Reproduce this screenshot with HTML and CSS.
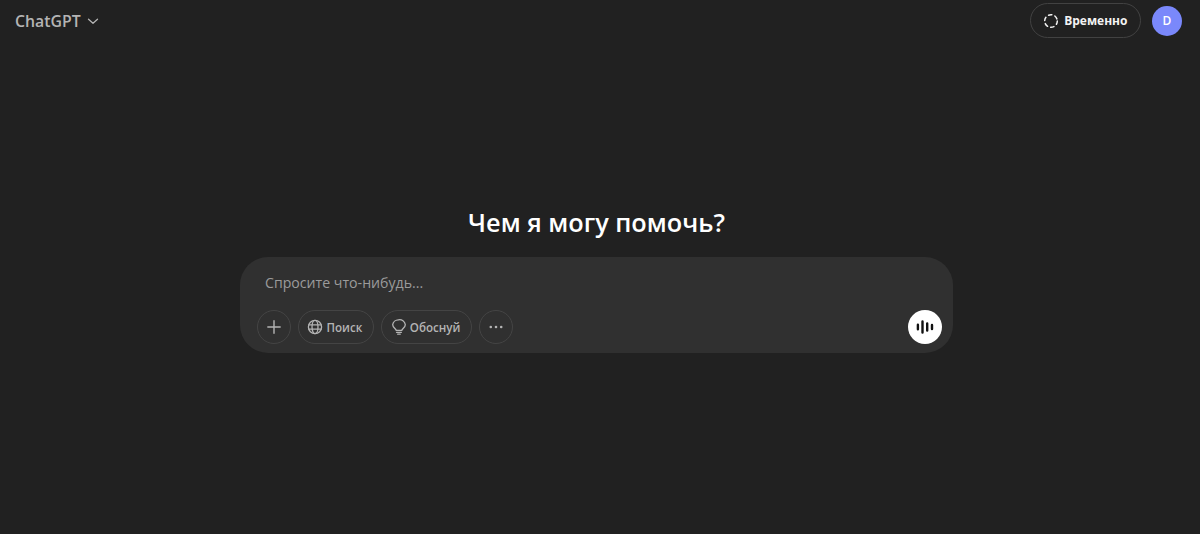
FILE: index.html
```html
<!DOCTYPE html>
<html lang="ru">
  <head>
    <meta charset="utf-8" />
    <title>ChatGPT</title>
    <link rel="stylesheet" href="styles.css">
  </head>

  <body>
    <header class="topbar">
      <div class="model">
        <span>ChatGPT</span>
        <svg class="chevron" width="12" height="12" viewBox="0 0 12 12" fill="none" stroke="currentColor" stroke-width="1.3" stroke-linecap="round" stroke-linejoin="round"><path d="M1.5 4.2 6 8.2 10.5 4.2"/></svg>
      </div>
      <div class="topbar-right">
        <button class="temp" type="button">
          <svg width="16" height="16" viewBox="0 0 16 16" fill="none" stroke="currentColor" stroke-width="1.5" stroke-linecap="round"><circle cx="8" cy="8" r="6.3" stroke-dasharray="3.4 3.2"/></svg>
          Временно
        </button>
        <div class="avatar">D</div>
      </div>
    </header>

    <main class="center">
      <h1 class="greeting">Чем я могу помочь?</h1>
      <form class="composer">
        <div class="prompt">Спросите что-нибудь...</div>
        <div class="tools">
          <button class="tool round" type="button" aria-label="Добавить">
            <svg width="16" height="16" viewBox="0 0 16 16" fill="none" stroke="currentColor" stroke-width="1.4" stroke-linecap="round"><path d="M8 1.8v12.400M1.800 8h12.400"/></svg>
          </button>
          <button class="tool" type="button">
            <svg width="16" height="16" viewBox="0 0 16 16" fill="none" stroke="currentColor" stroke-width="1.3"><circle cx="8" cy="8" r="6.600"/><ellipse cx="8" cy="8" rx="3" ry="6.600"/><path d="M1.400 5.800h13.200M1.400 10.200h13.200"/></svg>
            Поиск
          </button>
          <button class="tool" type="button">
            <svg width="16" height="16" viewBox="-1.500 0 16 16" fill="none" stroke="currentColor" stroke-width="1.3" stroke-linecap="round" stroke-linejoin="round"><path d="M4.700 11.400c0-1.500-3.500-2.800-3.500-5.700A5.700 5.700 0 0 1 7 .8a5.700 5.700 0 0 1 6.800 4.900c0 2.900-3.500 4.200-3.500 5.700z"/><path d="M5 13.300h4.900M6.200 15.200h2.500"/></svg>
            Обоснуй
          </button>
          <button class="tool round" type="button" aria-label="Ещё">
            <svg width="16" height="16" viewBox="0 0 16 16" fill="currentColor"><circle cx="2.800" cy="8" r="1.300"/><circle cx="8" cy="8" r="1.300"/><circle cx="13.200" cy="8" r="1.300"/></svg>
          </button>
          <button class="voice" type="button" aria-label="Голос">
            <svg width="20" height="20" viewBox="0 0 20 20" fill="none" stroke="currentColor" stroke-width="2.400" stroke-linecap="round"><path d="M2.900 7.800v4.400M7.500 4.500v11M12.200 6.500v7M17 8v4"/></svg>
          </button>
        </div>
      </form>
    </main>
  </body>
</html>
```

FILE: styles.css
```css
* {
  box-sizing: border-box;
}

body {
  margin: 0;
  height: 534px;
  overflow: hidden;
  background: #212121;
  color: #ececec;
  font-family: "Open Sans", "Noto Sans", sans-serif;
  display: flex;
  flex-direction: column;
}

button {
  font-family: inherit;
  color: inherit;
  background: none;
  cursor: pointer;
}

.topbar {
  display: flex;
  justify-content: space-between;
  align-items: center;
  padding: 0 18px 0 15px;
  height: 41px;
}

.model {
  display: flex;
  align-items: center;
  gap: 6px;
  font-size: 15.8px;
  font-weight: 600;
  color: #b4b4b4;
}

.chevron {
  margin-top: 1px;
}

.topbar-right {
  display: flex;
  align-items: center;
  gap: 11px;
}

.temp {
  display: flex;
  align-items: center;
  gap: 5px;
  height: 35px;
  padding: 0 12.5px 0 12px;
  border: 1px solid #424242;
  border-radius: 18px;
  font-size: 12px;
  font-weight: 700;
  color: #f3f3f3;
}

.avatar {
  width: 30px;
  height: 30px;
  border-radius: 50%;
  background: #7a88fb;
  color: #fff;
  font-size: 12px;
  font-weight: 600;
  display: flex;
  align-items: center;
  justify-content: center;
}

.center {
  display: flex;
  flex-direction: column;
  align-items: center;
  padding: 161px 7px 0 0;
}

.greeting {
  margin: 0 0 15px;
  font-size: 25.3px;
  line-height: 40px;
  font-weight: 600;
  color: #fff;
}

.composer {
  width: 713px;
  height: 96px;
  padding: 14px 11px 9px 16.5px;
  background: #303030;
  border-radius: 28px;
  display: flex;
  flex-direction: column;
  justify-content: space-between;
}

.prompt {
  padding-left: 8.5px;
  font-size: 14.15px;
  line-height: 24px;
  color: #9b9b9b;
}

.tools {
  display: flex;
  align-items: center;
  gap: 7px;
}

.tool {
  display: flex;
  align-items: center;
  gap: 4px;
  height: 34px;
  padding: 0 10.5px 0 8px;
  border: 1px solid #444;
  border-radius: 17px;
  font-size: 11.6px;
  font-weight: 600;
  color: #b4b4b4;
}

.tool.round {
  width: 34px;
  padding: 0;
  justify-content: center;
}

.voice {
  margin-left: auto;
  width: 34px;
  height: 34px;
  padding: 0;
  border: 0;
  border-radius: 50%;
  background: #fff;
  color: #111;
  display: flex;
  align-items: center;
  justify-content: center;
}
```
